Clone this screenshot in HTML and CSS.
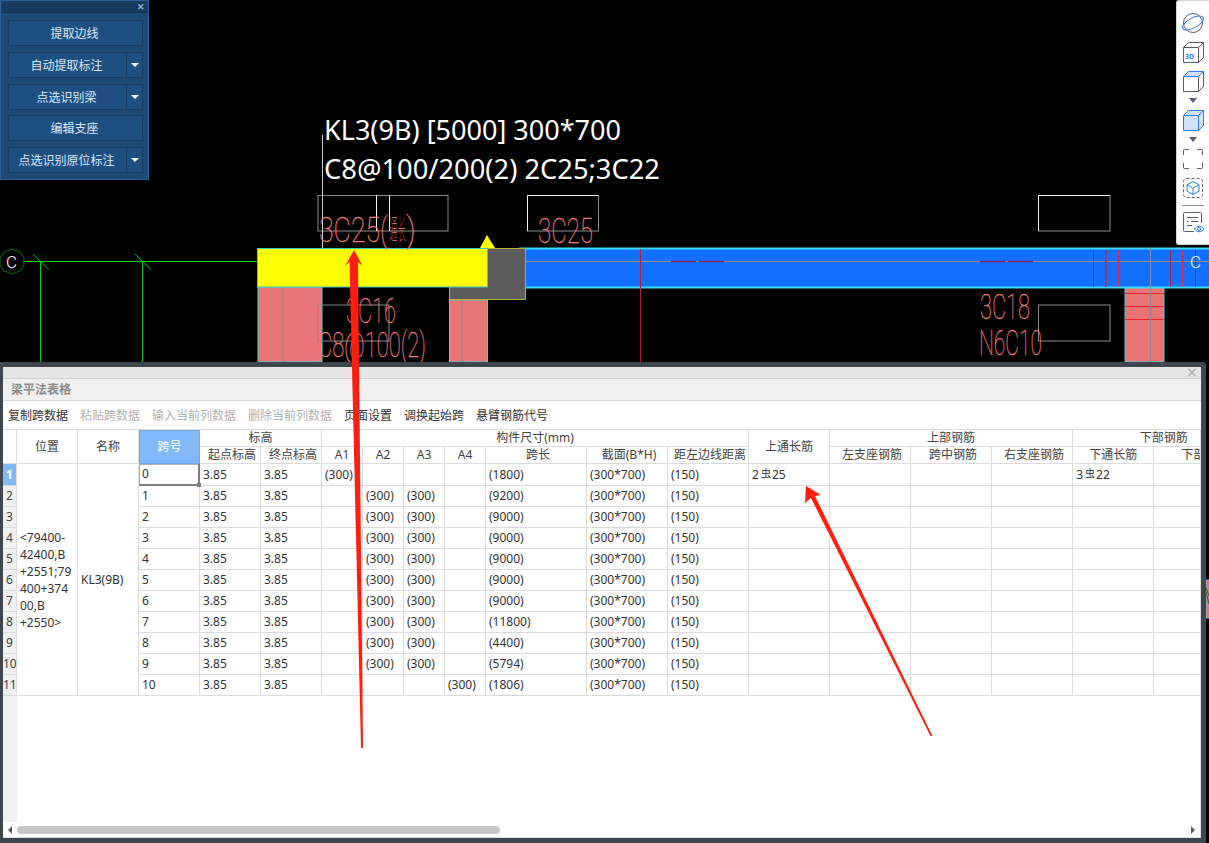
FILE: index.html
```html
<!DOCTYPE html>
<html lang="zh">
<head>
<meta charset="utf-8">
<title>梁平法表格</title>
<link rel="stylesheet" href="styles.css">
</head>
<body>
<div class="stage">
  <svg class="cad" width="1209" height="843" viewBox="0 0 1209 843">
    <!-- axis lines -->
    <g class="green">
      <path d="M24 261.500H257M40.500 262V362M142.500 262V362M33 254L49 269.500M135 254L151 269.500"/>
    </g>
    <polygon class="axis" points="12,249 20,252 24,258 24,265 20,271 12,274 4,271 0,265 0,258 4,252"/>
    <polygon class="axis" points="1196,249 1204,252 1208,258 1208,265 1204,271 1196,274 1188,271 1184,265 1184,258 1188,252"/>

    <!-- columns -->
    <rect class="col" x="258" y="287" width="64" height="75"/>
    <rect class="col" x="449.500" y="300" width="38" height="62"/>
    <rect class="col" x="1125" y="287" width="39" height="75"/>
    <rect class="col" x="1206" y="580" width="6" height="38"/>
    <path class="axis" d="M1206 588L1209 596M1209 604L1206 592"/>
    <path class="thin-gray" d="M283 287V362M462 300V362"/>
    <path class="red-bright" d="M1125 293.500H1164M1125 306.500H1164M1125 319.500H1164"/>

    <!-- beams -->
    <rect class="beam" x="520" y="248.500" width="695" height="39"/>
    <polygon class="gray-block" points="449.500,248.500 525.500,248.500 525.500,299.500 449.500,299.500"/>
    <rect class="yellow" x="257.500" y="248.500" width="230" height="38.500"/>
    <polygon class="tri" points="487,235 480,248 495,248"/>
    <path class="thin-gray" d="M526 261.500H1209M1150.500 248V362"/>
    <path class="red-dark" d="M640.500 249V362M1093.500 250V287M1170.500 250V287M1195.500 250V287"/>
    <path class="red-dash" d="M671 261.500H696M699 261.500H724M980 261.500H1005M1008 261.500H1033"/>
    <path class="purple" d="M1106 250V287"/>
    <path class="red-bright" d="M1118.500 250V287M1182.500 250V287"/>

    <!-- outline boxes -->
    <g class="boxes">
      <rect x="318" y="195.500" width="130" height="35.500"/>
      <rect x="527.500" y="195.500" width="71" height="35.500"/>
      <rect x="1038.500" y="195.500" width="71.500" height="35.500"/>
      <rect x="317.500" y="305" width="71.500" height="36"/>
      <rect x="1038.500" y="305" width="71.500" height="36"/>
      <path class="white-edge" d="M376.500 195V231M389.500 195V231M527.500 195V231M527.500 195.500H598M1038.500 195V231M1038.500 195.500H1110"/>
      <path class="lead" d="M322.500 135V248"/>
    </g>

    <!-- drawing labels -->
    <text class="cad-text" x="319" y="242" textLength="69" lengthAdjust="spacingAndGlyphs">3C25(</text>
    <text class="cad-text cad-small" x="389" y="240" textLength="17" lengthAdjust="spacingAndGlyphs">通长</text>
    <text class="cad-text" x="406" y="242" textLength="10" lengthAdjust="spacingAndGlyphs">)</text>
    <text class="cad-text" x="538" y="243" textLength="55" lengthAdjust="spacingAndGlyphs">3C25</text>
    <text class="cad-text" x="346" y="323" textLength="50" lengthAdjust="spacingAndGlyphs">3C16</text>
    <text class="cad-text" x="318" y="357" textLength="108" lengthAdjust="spacingAndGlyphs">C8@100(2)</text>
    <text class="cad-text" x="980" y="319" textLength="50" lengthAdjust="spacingAndGlyphs">3C18</text>
    <text class="cad-text" x="979" y="355" textLength="63" lengthAdjust="spacingAndGlyphs">N6C10</text>

    <text class="axis-label" x="6" y="268">C</text>
    <text class="axis-label" x="1190" y="268">C</text>
    <text class="title-text" x="324" y="140" textLength="297" lengthAdjust="spacingAndGlyphs">KL3(9B) [5000] 300*700</text>
    <text class="title-text" x="324" y="179" textLength="336" lengthAdjust="spacingAndGlyphs">C8@100/200(2) 2C25;3C22</text>
  </svg>

  <aside class="panel">
    <div class="panel-head"><span class="panel-close">✕</span></div>
    <div class="panel-body">
      <div class="pbtn"><span class="pbtn-main">提取边线</span></div>
      <div class="pbtn"><span class="pbtn-main">自动提取标注</span><span class="pbtn-drop"></span></div>
      <div class="pbtn"><span class="pbtn-main">点选识别梁</span><span class="pbtn-drop"></span></div>
      <div class="pbtn pbtn-tight"><span class="pbtn-main">编辑支座</span></div>
      <div class="pbtn"><span class="pbtn-main">点选识别原位标注</span><span class="pbtn-drop"></span></div>
    </div>
  </aside>

  <nav class="viewbar">
    <svg class="vicon" viewBox="0 0 24 24"><circle class="st-dark" cx="12" cy="12" r="9.500"/><ellipse class="st-blue" cx="12" cy="12" rx="11.500" ry="5" transform="rotate(-28 12 12)"/></svg>
    <svg class="vicon" viewBox="0 0 24 24"><path class="st-dark" d="M2.500 7.500h15v15h-15zM2.500 7.500l5-5h15v15l-5 5M17.500 7.500l5-5"/><text class="icon3d" x="4" y="18.500">3D</text></svg>
    <svg class="vicon" viewBox="0 0 24 24"><path class="st-dark" d="M2.500 7.500v15h15v-15M17.500 22.500l5-5v-15"/><path class="st-blue fill-soft" d="M2.500 7.500l5-5h15l-5 5z"/></svg>
    <span class="vcaret"></span>
    <svg class="vicon" viewBox="0 0 24 24"><path class="st-blue fill-soft" d="M2.500 7.500h15v15h-15zM2.500 7.500l5-5h15v15l-5 5M17.500 7.500l5-5"/></svg>
    <span class="vcaret"></span>
    <svg class="vicon" viewBox="0 0 24 24"><path class="st-dark" d="M2.500 8V3.500a1 1 0 0 1 1-1H8M16 2.500h4.500a1 1 0 0 1 1 1V8M21.500 16v4.500a1 1 0 0 1-1 1H16M8 21.500H3.500a1 1 0 0 1-1-1V16"/></svg>
    <svg class="vicon" viewBox="0 0 24 24"><rect class="st-dark dashed" x="2.500" y="2.500" width="19" height="19" rx="3"/><path class="st-blue" d="M12 5.500l6 3.300v6.400l-6 3.300-6-3.300V8.800zM6 8.800l6 3.400 6-3.400M12 12.200v6.300"/></svg>
    <span class="vrule"></span>
    <svg class="vicon" viewBox="0 0 24 24"><path class="st-dark" d="M20.500 13V3.500a1 1 0 0 0-1-1H3.500a1 1 0 0 0-1 1v17a1 1 0 0 0 1 1H13M6 7.500h11M6 11.500h1.500M10 11.500h7M6 15.500h5"/><path class="st-blue" d="M13.500 19c2.800-3.600 6.700-3.600 9.500 0-2.800 3.600-6.700 3.600-9.500 0z"/><circle class="st-blue" cx="18.200" cy="19" r="1.500"/></svg>
  </nav>

  <section class="dialog">
    <div class="dlg-strip"><span class="dlg-close">×</span></div>
    <div class="dlg-title">梁平法表格</div>
    <div class="dlg-tools">
      <span>复制跨数据</span>
      <span class="off">粘贴跨数据</span>
      <span class="off">输入当前列数据</span>
      <span class="off">删除当前列数据</span>
      <span>页面设置</span>
      <span>调换起始跨</span>
      <span>悬臂钢筋代号</span>
    </div>
    <div class="grid-wrap">
      <table class="grid">
        <colgroup>
          <col class="w-h"><col class="w-n"><col class="w-n"><col class="w-n"><col class="w-n"><col class="w-n">
          <col class="w-a"><col class="w-a"><col class="w-a"><col class="w-a">
          <col class="w-l"><col class="w-r"><col class="w-r"><col class="w-r"><col class="w-r"><col class="w-r"><col class="w-r"><col class="w-r"><col class="w-l">
        </colgroup>
        <thead>
          <tr>
            <th rowspan="2" class="corner"></th>
            <th rowspan="2">位置</th>
            <th rowspan="2">名称</th>
            <th rowspan="2" class="span-head">跨号</th>
            <th colspan="2">标高</th>
            <th colspan="7">构件尺寸(mm)</th>
            <th rowspan="2">上通长筋</th>
            <th colspan="3">上部钢筋</th>
            <th colspan="2">下部钢筋</th>
          </tr>
          <tr>
            <th class="sh">起点标高</th><th class="sh">终点标高</th><th>A1</th><th>A2</th><th>A3</th><th>A4</th><th class="sh">跨长</th><th class="sh">截面(B*H)</th><th class="sh">距左边线距离</th>
            <th class="sh">左支座钢筋</th><th class="sh">跨中钢筋</th><th class="sh">右支座钢筋</th><th>下通长筋</th><th class="clip-left">下部钢筋</th>
          </tr>
        </thead>
        <tbody>
          <tr><td class="rh rh-on">1</td>
            <td rowspan="11" class="pos">&lt;79400-<br>42400,B<br>+2551;79<br>400+374<br>00,B<br>+2550&gt;</td>
            <td rowspan="11">KL3(9B)</td>
            <td class="sel">0</td><td>3.85</td><td>3.85</td><td>(300)</td><td></td><td></td><td></td><td>(1800)</td><td>(300*700)</td><td>(150)</td><td>2<span class="rebar">虫</span>25</td><td></td><td></td><td></td><td>3<span class="rebar">虫</span>22</td><td></td></tr>
          <tr><td class="rh">2</td><td>1</td><td>3.85</td><td>3.85</td><td></td><td>(300)</td><td>(300)</td><td></td><td>(9200)</td><td>(300*700)</td><td>(150)</td><td></td><td></td><td></td><td></td><td></td><td></td></tr>
          <tr><td class="rh">3</td><td>2</td><td>3.85</td><td>3.85</td><td></td><td>(300)</td><td>(300)</td><td></td><td>(9000)</td><td>(300*700)</td><td>(150)</td><td></td><td></td><td></td><td></td><td></td><td></td></tr>
          <tr><td class="rh">4</td><td>3</td><td>3.85</td><td>3.85</td><td></td><td>(300)</td><td>(300)</td><td></td><td>(9000)</td><td>(300*700)</td><td>(150)</td><td></td><td></td><td></td><td></td><td></td><td></td></tr>
          <tr><td class="rh">5</td><td>4</td><td>3.85</td><td>3.85</td><td></td><td>(300)</td><td>(300)</td><td></td><td>(9000)</td><td>(300*700)</td><td>(150)</td><td></td><td></td><td></td><td></td><td></td><td></td></tr>
          <tr><td class="rh">6</td><td>5</td><td>3.85</td><td>3.85</td><td></td><td>(300)</td><td>(300)</td><td></td><td>(9000)</td><td>(300*700)</td><td>(150)</td><td></td><td></td><td></td><td></td><td></td><td></td></tr>
          <tr><td class="rh">7</td><td>6</td><td>3.85</td><td>3.85</td><td></td><td>(300)</td><td>(300)</td><td></td><td>(9000)</td><td>(300*700)</td><td>(150)</td><td></td><td></td><td></td><td></td><td></td><td></td></tr>
          <tr><td class="rh">8</td><td>7</td><td>3.85</td><td>3.85</td><td></td><td>(300)</td><td>(300)</td><td></td><td>(11800)</td><td>(300*700)</td><td>(150)</td><td></td><td></td><td></td><td></td><td></td><td></td></tr>
          <tr><td class="rh">9</td><td>8</td><td>3.85</td><td>3.85</td><td></td><td>(300)</td><td>(300)</td><td></td><td>(4400)</td><td>(300*700)</td><td>(150)</td><td></td><td></td><td></td><td></td><td></td><td></td></tr>
          <tr><td class="rh">10</td><td>9</td><td>3.85</td><td>3.85</td><td></td><td>(300)</td><td>(300)</td><td></td><td>(5794)</td><td>(300*700)</td><td>(150)</td><td></td><td></td><td></td><td></td><td></td><td></td></tr>
          <tr><td class="rh">11</td><td>10</td><td>3.85</td><td>3.85</td><td></td><td></td><td></td><td>(300)</td><td>(1806)</td><td>(300*700)</td><td>(150)</td><td></td><td></td><td></td><td></td><td></td><td></td></tr>
        </tbody>
      </table>
    </div>
    <div class="hscroll">
      <span class="arrow-l"></span>
      <div class="track"><div class="thumb"></div></div>
      <span class="arrow-r"></span>
    </div>
  </section>

  <svg class="annot" width="1209" height="843" viewBox="0 0 1209 843">
    <polygon points="354,250 362.500,266 358,262 363,748 361,748 349.500,262 345,266"/>
    <polygon points="806,486 821,495 815,496 932.500,736 930.500,736 811,498 805,503"/>
  </svg>
</div>
</body>
</html>
```

FILE: styles.css
```css
* { box-sizing: border-box; }
html, body { margin: 0; padding: 0; background: #000; }
body {
  font-family: "Noto Sans", "Noto Sans CJK SC", sans-serif;
  font-size: 12px;
  color: #333;
}
.stage { position: relative; width: 1209px; height: 843px; overflow: hidden; background: #000; }

/* CAD drawing */
.cad { position: absolute; left: 0; top: 0; }
.green path { fill: none; stroke: #00d000; stroke-width: 1; }
.axis { fill: none; stroke: #0b7a16; stroke-width: 1; }
.axis-label { fill: #fff; font: 300 17px "Roboto", sans-serif; }
.col { fill: #e87474; stroke: #3fd8e0; stroke-width: 1; }
.beam { fill: #1170ff; stroke: #36dcff; stroke-width: 2; }
.gray-block { fill: #5c5c5c; stroke: #b4b428; stroke-width: 1; }
.yellow { fill: #ffff00; stroke: #36c8c8; stroke-width: 1; }
.tri { fill: #ffff00; }
.thin-gray { fill: none; stroke: #8a8a8a; stroke-width: 1; }
.red-dark { fill: none; stroke: #a8233c; stroke-width: 1; }
.red-dash { fill: none; stroke: #8c2060; stroke-width: 1.5; }
.purple { fill: none; stroke: #8a3a78; stroke-width: 2; }
.red-bright { fill: none; stroke: #f0202c; stroke-width: 1; }
.boxes rect { fill: none; stroke: #8c8c8c; stroke-width: 1; }
.boxes .white-edge { fill: none; stroke: #f2f2f2; stroke-width: 1; }
.boxes .lead { fill: none; stroke: #cfcfcf; stroke-width: 1; }
.cad-text {
  fill: #ea7a7a;
  stroke: #ea7a7a;
  stroke-width: 0.3;
  font-family: "Roboto", "Noto Sans CJK SC", sans-serif;
  font-weight: 100;
  font-size: 35px;
}
.cad-small { font-size: 28px; stroke-width: 0; }
.title-text {
  fill: #fff;
  font-family: "Noto Sans", sans-serif;
  font-size: 28px;
}

/* Floating tool panel */
.panel {
  position: absolute; left: 0; top: 0; width: 149px; height: 180px;
  background: #1e4a76; border: 1px solid #2d5f98;
}
.panel-head {
  height: 12px; background: #193a5c; border-bottom: 1px solid #12304e;
  display: flex; justify-content: flex-end; align-items: center; padding-right: 3px;
}
.panel-close { color: #8fb4dc; font-size: 9px; line-height: 10px; font-weight: bold; }
.panel-body { display: flex; flex-direction: column; gap: 6px; padding: 7px 5px 0 7px; }
.pbtn { display: flex; height: 26px; background: #1f4f80; border: 1px solid #193c60; color: #dce9f6; }
.pbtn-tight { margin-top: -1px; }
.pbtn-main { flex: 1; display: flex; align-items: center; justify-content: center; padding-right: 2px; }
.pbtn-drop { width: 16px; position: relative; border-left: 1px solid #193c60; }
.pbtn-drop::after {
  content: ""; position: absolute; left: 4px; top: 10px;
  border: 4px solid transparent; border-top: 4px solid #fff; border-bottom: 0;
}

/* Right view toolbar */
.viewbar {
  position: absolute; left: 1176px; top: 0; width: 33px; height: 245px;
  background: #fff; border: 1px solid #d4d4d4; border-right: 0;
  border-radius: 3px 0 0 3px;
  display: flex; flex-direction: column; align-items: center; gap: 5px;
  padding-top: 10px;
}
.vicon { width: 24px; height: 24px; flex: none; }
.st-dark { fill: none; stroke: #565e6c; stroke-width: 1; }
.st-blue { fill: none; stroke: #2f80ed; stroke-width: 1; }
.fill-soft { fill: #cfe2f8; }
.dashed { stroke-dasharray: 3 2; }
.icon3d { fill: #2f80ed; font: bold 7px "Noto Sans", sans-serif; }
.vcaret { width: 0; height: 0; flex: none; border: 4px solid transparent; border-top: 5px solid #565e6c; border-bottom: 0; }
.vrule { width: 22px; height: 1px; flex: none; background: #8a8a8a; margin-bottom: -1px; }

/* Dialog */
.dialog {
  position: absolute; left: 0; top: 362px; width: 1206px; height: 481px;
  display: flex; flex-direction: column;
  background: #fff;
  border: solid #3f464e; border-width: 5px 5px 5px 3px;
  border-top-right-radius: 4px;
}
.dlg-strip {
  height: 12px; flex: none; background: #e6e6e6; border-bottom: 1px solid #d4d4d4;
  display: flex; justify-content: flex-end; align-items: center; padding-right: 4px;
}
.dlg-close { color: #a8a8a8; font-size: 18px; line-height: 11px; }
.dlg-title {
  height: 22px; flex: none; background: #f0f0f0; border-bottom: 1px solid #d8d8d8;
  padding-left: 8px; line-height: 21px; font-weight: bold; color: #8a8a8a;
}
.dlg-tools {
  height: 29px; flex: none; display: flex; gap: 12px; align-items: center;
  padding-left: 5px; border-bottom: 1px solid #dedede; color: #333;
}
.dlg-tools .off { color: #b2b2b2; }
.grid-wrap {
  flex: 1; min-height: 0; overflow: hidden;
  background: linear-gradient(90deg, #f0f0f0 14px, #fff 14px);
  border-right: 1px solid #dedede;
}
.grid { table-layout: fixed; width: 1252px; border-collapse: separate; border-spacing: 0; background: #fff; }
.w-h { width: 14px; }
.w-n { width: 61px; }
.w-a { width: 41px; }
.w-r { width: 81px; }
.w-l { width: 101px; }
.grid th, .grid td {
  border: solid #dcdcdc; border-width: 0 1px 1px 0;
  padding: 0 3px; white-space: nowrap; overflow: hidden;
}
.grid th { height: 17px; font-weight: normal; text-align: center; line-height: 16px; color: #444; }
.grid th.sh { padding: 0 0 0 4px; }
.grid td { height: 21px; line-height: 20px; text-align: left; color: #333; }
.grid th.corner { background: #fff; }
.grid th.span-head { background: #80b8f8; color: #fff; border: 1px solid #6ba9ee; border-top-width: 1px; }
.grid th.clip-left { text-align: left; padding-left: 27px; }
.grid td.rh { padding: 0; text-align: center; background: #f0f0f0; overflow: visible; color: #444; }
.grid td.rh-on { background: #80b8f8; color: #fff; font-weight: bold; }
.grid td.pos { white-space: normal; line-height: 17px; }
.grid td.sel {
  position: relative; overflow: visible;
  border-right: 2px solid #808080; border-bottom: 2px solid #808080;
  box-shadow: inset 1px 1px 0 #b0b0b0;
}
.grid td.sel::after {
  content: ""; position: absolute; right: -3px; bottom: -3px; width: 4px; height: 4px; background: #808080;
}
.rebar { font-size: 10px; position: relative; top: -2px; margin: 0 1px 0 2px; }

/* Horizontal scrollbar */
.hscroll {
  height: 16px; flex: none; display: flex; align-items: center;
  border-right: 1px solid #dedede; border-bottom: 1px solid #dedede;
}
.arrow-l { flex: none; width: 9px; height: 0; border: solid transparent; border-width: 4px 4px 4px 5px; border-right-color: #555e6c; margin-right: 5px; }
.track { flex: 1; }
.thumb { width: 483px; height: 8px; background: #c8c8c8; border-radius: 4px; }
.arrow-r { flex: none; width: 0; height: 0; border: 4px solid transparent; border-left: 4px solid #555e6c; border-right: 0; margin-right: 5px; }

/* Hand-drawn annotations */
.annot { position: absolute; left: 0; top: 0; pointer-events: none; }
.annot polygon { fill: #ff1e10; }
```
